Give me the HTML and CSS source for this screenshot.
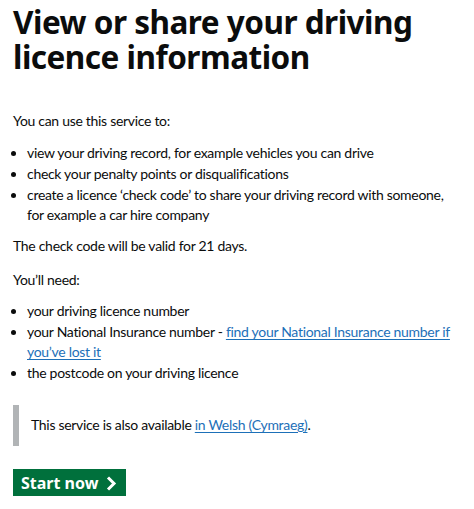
FILE: index.html
```html
<!DOCTYPE html>
<html lang="en">
<head>
<meta charset="utf-8">
<title>View or share your driving licence information</title>
<link rel="stylesheet" href="styles.css">
</head>
<body>
<main class="page">
  <h1 class="title">View or share your driving licence information</h1>
  <p class="body">You can use this service to:</p>
  <ul class="list">
    <li>view your driving record, for example vehicles you can drive</li>
    <li>check your penalty points or disqualifications</li>
    <li>create a licence ‘check code’ to share your driving record with someone, for example a car hire company</li>
  </ul>
  <p class="body body-wide">The check code will be valid for 21 days.</p>
  <p class="body body-tight">You’ll need:</p>
  <ul class="list">
    <li>your driving licence number</li>
    <li>your National Insurance number - <a class="link" href="#">find your National Insurance number if you’ve lost it</a></li>
    <li>the postcode on your driving licence</li>
  </ul>
  <div class="inset">This service is also available <a class="link" href="#">in Welsh (Cymraeg)</a>.</div>
  <a class="button" href="#">Start now
    <svg class="chevron" width="11" height="15" viewBox="0 0 11 15" aria-hidden="true"><path d="M2 1.5 L8 7.5 L2 13.5" fill="none" stroke="#fff" stroke-width="3"/></svg>
  </a>
</main>
</body>
</html>
```
FILE: styles.css
```css
html, body { margin: 0; padding: 0; background: #fff; }
.page {
  padding: 4px 13px 0 13px;
  font-family: "Lato", "Liberation Sans", sans-serif;
  color: #0b0c0c;
  font-size: 14px;
  line-height: 20px;
  letter-spacing: -0.3px;
}
.title {
  font-family: "Noto Sans", "Liberation Sans", sans-serif;
  font-weight: 700;
  font-size: 31.5px;
  line-height: 35px;
  margin: 0 0 37px 0;
  letter-spacing: -0.5px;
}
.body { margin: 0 0 12px 0; }
.body-wide { margin-bottom: 14px; }
.body-tight { margin-bottom: 11px; }
.list { margin: 0 0 11px 0; padding-left: 14px; list-style: disc; }
.list li { margin-bottom: 1px; padding-left: 0; }
.link { color: #1d70b8; text-decoration: underline; text-underline-offset: 2px; }
.inset {
  border-left: 6px solid #b1b4b6;
  padding: 10px 0 11px 12px;
  margin: 22px 0 23px 0;
}
.button {
  display: flex;
  width: fit-content;
  align-items: center;
  gap: 8px;
  background: #00703c;
  color: #fff;
  font-family: "Noto Sans", "Liberation Sans", sans-serif;
  font-weight: 700;
  font-size: 16px;
  line-height: 20px;
  padding: 4px 9px 3px 8px;
  box-shadow: 0 3px 0 #002d18;
  text-decoration: none;
  letter-spacing: 0;
}
.chevron { display: block; }
```
